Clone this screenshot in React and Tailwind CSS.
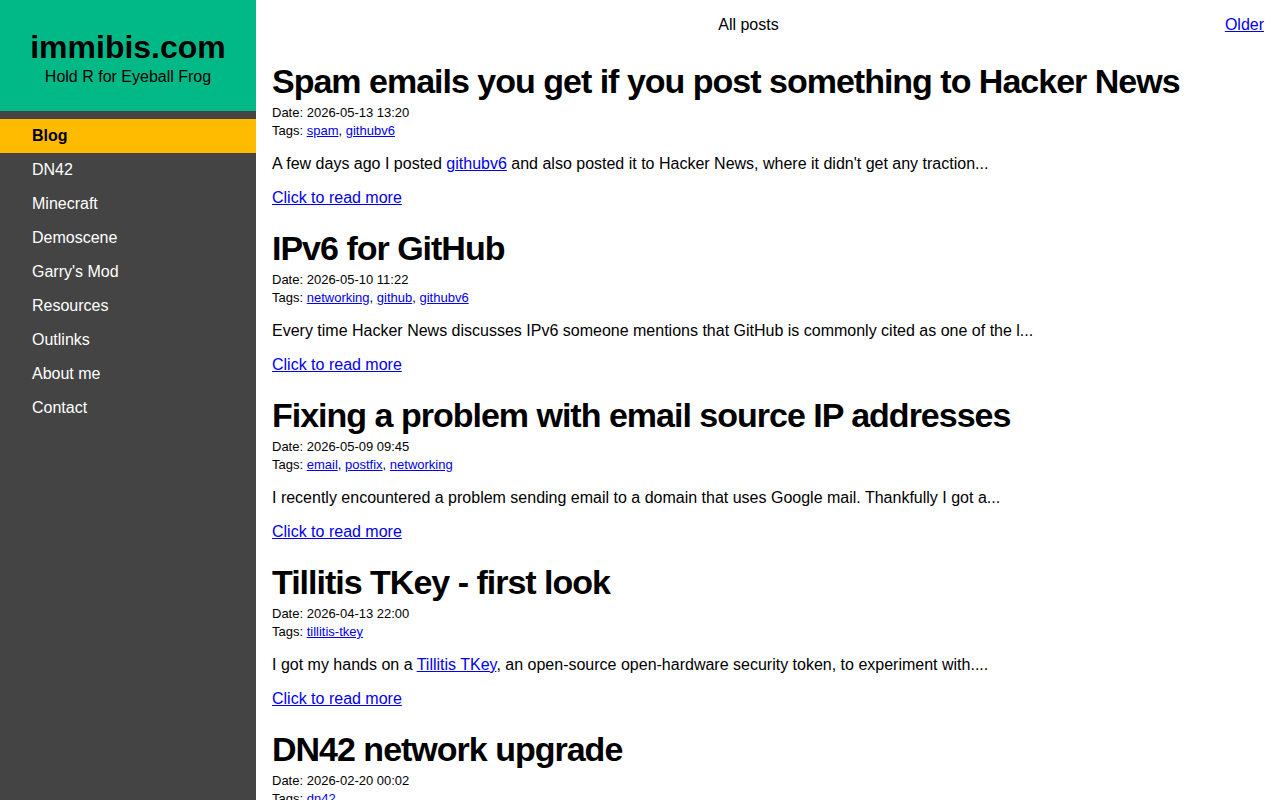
import React from 'react';

const navItems = [
  'Blog',
  'DN42',
  'Minecraft',
  'Demoscene',
  "Garry's Mod",
  'Resources',
  'Outlinks',
  'About me',
  'Contact',
];

const posts = [
  {
    title: 'Spam emails you get if you post something to Hacker News',
    date: '2026-05-13 13:20',
    tags: ['spam', 'githubv6'],
    body: (
      <>
        A few days ago I posted <a href="#" className="text-[#0000ee] underline">githubv6</a> and also posted it to Hacker News, where it didn't get any traction...
      </>
    ),
  },
  {
    title: 'IPv6 for GitHub',
    date: '2026-05-10 11:22',
    tags: ['networking', 'github', 'githubv6'],
    body: 'Every time Hacker News discusses IPv6 someone mentions that GitHub is commonly cited as one of the l...',
  },
  {
    title: 'Fixing a problem with email source IP addresses',
    date: '2026-05-09 09:45',
    tags: ['email', 'postfix', 'networking'],
    body: 'I recently encountered a problem sending email to a domain that uses Google mail. Thankfully I got a...',
  },
  {
    title: 'Tillitis TKey - first look',
    date: '2026-04-13 22:00',
    tags: ['tillitis-tkey'],
    body: (
      <>
        I got my hands on a <a href="#" className="text-[#0000ee] underline">Tillitis TKey</a>, an open-source open-hardware security token, to experiment with....
      </>
    ),
  },
  {
    title: 'DN42 network upgrade',
    date: '2026-02-20 00:02',
    tags: ['dn42'],
    body: 'I finally got around to upgrading my DN42 network...',
  },
];

function Post({ post }) {
  return (
    <div className="pt-[19px]">
      {/* Title */}
      <h1 className="mb-[1px] text-[34px] font-bold leading-[44px] tracking-[-1px] whitespace-nowrap text-black">{post.title}</h1>
      <div className="text-[13px] leading-[18px]">Date: {post.date}</div>
      <div className="text-[13px] leading-[18px]">
        Tags:{' '}
        {post.tags.map((tag, i) => (
          <span key={tag}>
            <a href="#" className="text-[#0000ee] underline">{tag}</a>
            {i < post.tags.length - 1 ? ', ' : ''}
          </span>
        ))}
      </div>
      <p className="mt-[15px] leading-[18px]">{post.body}</p>
      <p className="mt-[16px] leading-[18px]">
        <a href="#" className="text-[#0000ee] underline">Click to read more</a>
      </p>
    </div>
  );
}

export default function App() {
  return (
    <div
      className="flex min-h-screen bg-white text-base text-black"
      style={{ fontFamily: '"Liberation Sans", Arial, Helvetica, sans-serif' }}
    >
      {/* Sidebar */}
      <aside className="w-64 shrink-0 bg-[#444444]">
        <div className="bg-[#00b987] pt-[29px] pb-[25px] text-center">
          <div className="text-[32px] font-bold leading-[36px]">immibis.com</div>
          <div className="mt-[3px] leading-[18px]">Hold R for Eyeball Frog</div>
        </div>
        <nav className="mt-[8px]">
          {navItems.map((item) =>
            item === 'Blog' ? (
              <div key={item} className="bg-[#ffbb00] px-8 py-2 font-bold leading-[18px] text-black">
                {item}
              </div>
            ) : (
              <div key={item} className="px-8 py-2 leading-[18px] text-white">
                {item}
              </div>
            )
          )}
        </nav>
      </aside>

      {/* Main */}
      <main className="flex-1 px-4">
        <div className="flex justify-between pt-[16px] pb-[6px] leading-[18px]">
          <span></span>
          <span>All posts</span>
          <a href="#" className="text-[#0000ee] underline">Older</a>
        </div>
        {posts.map((post) => (
          <Post key={post.title} post={post} />
        ))}
      </main>
    </div>
  );
}
